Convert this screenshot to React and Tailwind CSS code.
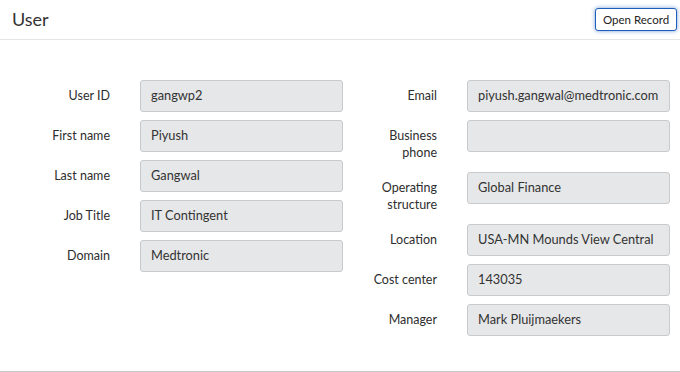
import React from "react";

const leftFields = [
  { label: "User ID", value: "gangwp2" },
  { label: "First name", value: "Piyush" },
  { label: "Last name", value: "Gangwal" },
  { label: "Job Title", value: "IT Contingent" },
  { label: "Domain", value: "Medtronic" },
];

const rightFields = [
  { label: "Email", value: "piyush.gangwal@medtronic.com" },
  { label: ["Business", "phone"], value: "" },
  { label: ["Operating", "structure"], value: "Global Finance" },
  { label: "Location", value: "USA-MN Mounds View Central" },
  { label: "Cost center", value: "143035" },
  { label: "Manager", value: "Mark Pluijmaekers" },
];

const Field = ({ label, value, labelWidth }) => {
  const lines = Array.isArray(label) ? label : [label];
  return (
    <div className="flex items-start mb-[8px]">
      {/* label column, right aligned */}
      <div
        className={`${labelWidth} shrink-0 text-right text-[12.5px] leading-[17px] text-[#2e2e2e] pt-[7px] pb-[3px] pr-[30px]`}
      >
        {lines.map((l) => (
          <div key={l}>{l}</div>
        ))}
      </div>
      <div className="w-[203px] h-[32px] shrink-0 bg-[#e6e7e8] border border-[#c9cacb] rounded-[3px] px-[10px] flex items-center whitespace-nowrap overflow-hidden text-[12.8px] text-[#333]">
        {value}
      </div>
    </div>
  );
};

export default function App() {
  return (
    <div className="w-[680px] h-[372px] bg-white font-['Lato',sans-serif] relative">
      {/* header */}
      <div className="h-[40px] flex items-center justify-between pl-[12px] pr-[3px] border-b border-[#e5e5e5]">
        <h1 className="text-[18px] text-[#333] font-normal">User</h1>
        <button
          type="button"
          className="w-[82px] h-[23px] text-[11.5px] text-[#222] bg-white border border-[#1f5dbd] rounded-[3px] shadow-[0_0_4px_rgba(31,93,189,0.6)]"
        >
          Open Record
        </button>
      </div>
      {/* form body */}
      <div className="flex pt-[40px] border-b border-[#c8c8c8] h-[332px]">
        <div className="w-[343px] shrink-0">
          {leftFields.map((f) => (
            <Field key={f.label} labelWidth="w-[140px]" {...f} />
          ))}
        </div>
        <div className="w-[327px] shrink-0">
          {rightFields.map((f) => (
            <Field key={String(f.label)} labelWidth="w-[124px]" {...f} />
          ))}
        </div>
      </div>
    </div>
  );
}
